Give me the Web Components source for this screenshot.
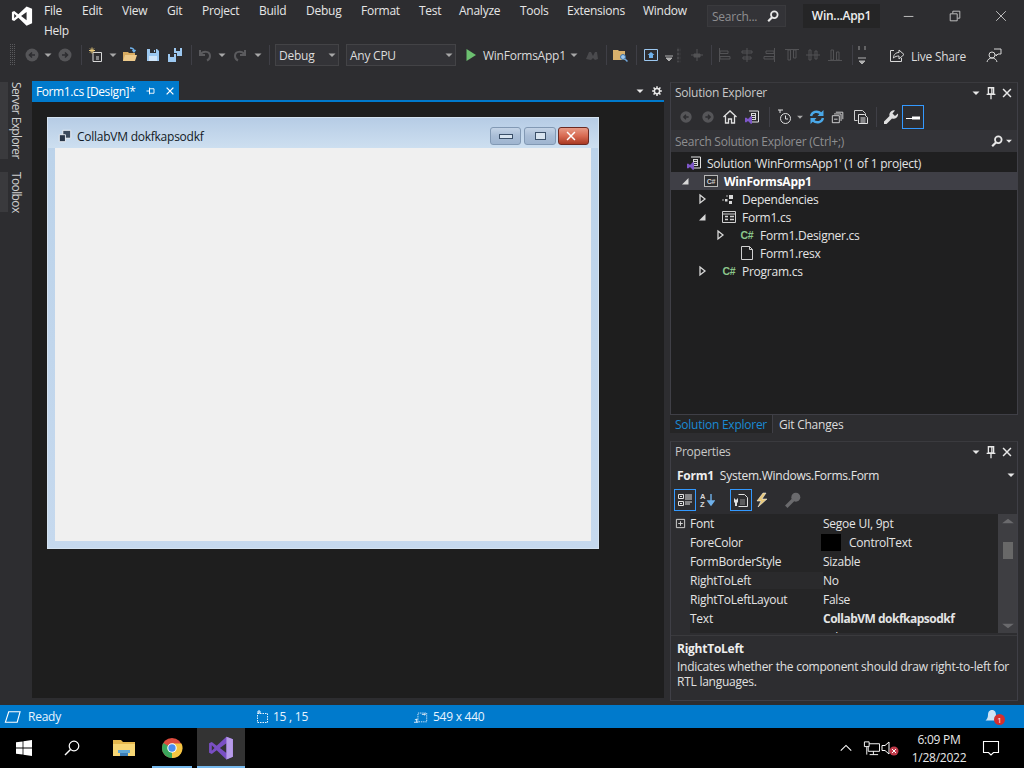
<!DOCTYPE html>
<html>
<head>
<meta charset="utf-8">
<title>WinFormsApp1</title>
<style>
    html, body { margin: 0; padding: 0; width: 1024px; height: 768px; overflow: hidden; background: #2d2d30; }
    body { font: 12px "Open Sans", "Liberation Sans", sans-serif; color: #e4e4e4; letter-spacing: -0.25px; }
</style>
</head>
<body>
<vs-app></vs-app>
<script>
const VS_PATH = 'M17 1.5 8 10 3.5 6.5 1 7.7v8.6l2.5 1.2L8 14l9 8.5 6-2.5V4zM17 7.5v9L11 12zM3.5 9.5 6 12l-2.5 2.5z';
const ICONS = {
    vs: `<svg viewBox="0 0 24 24"><path fill="#fff" fill-rule="evenodd" d="${VS_PATH}"/></svg>`,
    vspurple: `<svg viewBox="0 0 24 24"><path fill="#7a4fc4" fill-rule="evenodd" d="${VS_PATH}"/><path fill="#b79be8" d="M17 1.5 23 4v16l-6 2.5v-6V7.500z"/></svg>`,
    drop: `<svg viewBox="0 0 12 12"><path fill="currentColor" d="M2.500 4.500h7L6 8z"/></svg>`,
    grip: `<svg viewBox="0 0 6 22"><defs><pattern id="g" width="2" height="2" patternUnits="userSpaceOnUse"><rect width="1" height="1" fill="#5a5a5d"/></pattern></defs><rect width="6" height="22" fill="url(#g)"/></svg>`,
    back: `<svg viewBox="0 0 16 16"><circle cx="8" cy="8" r="6.5" fill="#555558"/><path d="M11 8H6M8 5.5 5.5 8 8 10.5" fill="none" stroke="#2d2d30" stroke-width="1.6"/></svg>`,
    forward: `<svg viewBox="0 0 16 16"><circle cx="8" cy="8" r="6.5" fill="#555558"/><path d="M5 8h5M8 5.5 10.5 8 8 10.5" fill="none" stroke="#2d2d30" stroke-width="1.6"/></svg>`,
    newitem: `<svg viewBox="0 0 16 16"><path d="M5 5.5h8.5v9H5z" fill="none" stroke="#d8d8d8"/><path d="M8 10h3M8 12h3" stroke="#d8d8d8"/><path d="M4 .5v6M1 3.5h6M2 1.5l4 4M6 1.5l-4 4" stroke="#e8c878"/></svg>`,
    open: `<svg viewBox="0 0 16 16"><path d="M1 5h5l1 1h6v8H1z" fill="#d8ab61"/><path d="M3 8h12l-2 6H1z" fill="#edca8c"/><path d="M8 1c3 0 4 1 4 3M10.500 3 12 5l1.500-2" fill="none" stroke="#6fb1ea" stroke-width="1.300"/></svg>`,
    save: `<svg viewBox="0 0 16 16"><path d="M2 2h10l2 2v10H2z" fill="#9cc8f0"/><path d="M5 2h6v4H5z" fill="#2d2d30"/><path d="M9 3h1v2H9z" fill="#9cc8f0"/><path d="M4 9h8v5H4z" fill="#cfe4f8"/></svg>`,
    saveall: `<svg viewBox="0 0 16 16"><path d="M1 7h8v8H1z" fill="#9cc8f0"/><path d="M3 7h4v3H3z" fill="#2d2d30"/><path d="M7 1h8v8H10V6H7z" fill="#9cc8f0"/><path d="M9 1h4v3H9z" fill="#2d2d30"/></svg>`,
    undo: `<svg viewBox="0 0 16 16"><path d="M3 3v5h5M3.500 7.500C6 3.500 13 4 13 9c0 2-1 3.500-3 4.500" fill="none" stroke="#5b5b5e" stroke-width="2"/></svg>`,
    redo: `<svg viewBox="0 0 16 16"><path d="M13 3v5H8M12.500 7.500C10 3.500 3 4 3 9c0 2 1 3.500 3 4.500" fill="none" stroke="#5b5b5e" stroke-width="2"/></svg>`,
    play: `<svg viewBox="0 0 16 16"><path fill="#6cc070" d="M3.500 2 13 8l-9.500 6z"/></svg>`,
    attach: `<svg viewBox="0 0 16 16"><path fill="#4a4a4d" d="M2 12 5 5h2l2 4 2-4h2l1 7-3 1-2-2-2 2z"/></svg>`,
    findfolder: `<svg viewBox="0 0 16 16"><path d="M1 3h5l1 1h6v9H1z" fill="#d8b06c"/><circle cx="11" cy="10" r="2.500" fill="#9cc8f0" stroke="#3c6fa0"/><path d="m13 12 2.500 2.500" stroke="#6fa6db" stroke-width="1.500"/></svg>`,
    homebox: `<svg viewBox="0 0 16 16"><path d="M1.500 2.500h13v11h-13z" fill="none" stroke="#9cc8f0"/><path d="M8 5 4.500 8H6v3h4V8h1.500z" fill="#6fb1ea"/></svg>`,
    dropbar: `<svg viewBox="0 0 12 16"><path d="M2 9h8M3 11h6l-3 3z" stroke="#b0b0b0" fill="#b0b0b0"/></svg>`,
    alignT: `<svg viewBox="0 0 16 16"><path d="M8 2v12M2 8h12M5 7h6v3H5z" stroke="#525255" fill="#525255"/></svg>`,
    alignL: `<svg viewBox="0 0 16 16"><path d="M2.500 1v14" stroke="#525255"/><path d="M3 4h8v2.500H3zM3 9.500h10V12H3z" fill="none" stroke="#525255"/></svg>`,
    alignC: `<svg viewBox="0 0 16 16"><path d="M8 1v14" stroke="#525255"/><path d="M3 4h10v2H3zM4 10h8v2H4z" fill="none" stroke="#525255"/></svg>`,
    alignR: `<svg viewBox="0 0 16 16"><path d="M13.500 1v14" stroke="#525255"/><path d="M5 4h8v2.500H5zM3 9.500h10V12H3z" fill="none" stroke="#525255"/></svg>`,
    alignTop: `<svg viewBox="0 0 16 16"><path d="M1 2.500h14" stroke="#525255"/><path d="M4 3v10h2.500V3zM9.500 3v8H12V3z" fill="none" stroke="#525255"/></svg>`,
    alignMid: `<svg viewBox="0 0 16 16"><path d="M1 8h14" stroke="#525255"/><path d="M4 3v10h2V3zM10 4v8h2V4z" fill="none" stroke="#525255"/></svg>`,
    alignBot: `<svg viewBox="0 0 16 16"><path d="M1 13.500h14" stroke="#525255"/><path d="M4 3v10h2.500V3zM9.500 5v8H12V5z" fill="none" stroke="#525255"/></svg>`,
    spacing: `<svg viewBox="0 0 16 22"><path d="M5 2v4M11 2v4" stroke="#9a9a9a"/><path d="M4 14h8M5 17h6l-3 3z" stroke="#b0b0b0" fill="#b0b0b0"/></svg>`,
    liveshare: `<svg viewBox="0 0 16 16"><path d="M5 3.500H1.500v11h11V11" fill="none" stroke="#d8d8d8"/><path d="M4.500 11c0-4 3-5.500 5.500-5.500V3l5 4.500-5 4.500V9c-2 0-4 .5-5.500 2z" fill="none" stroke="#d8d8d8"/></svg>`,
    feedback: `<svg viewBox="0 0 16 16"><circle cx="6" cy="8" r="3" fill="none" stroke="#d8d8d8"/><path d="M1 15c.5-2.500 2.500-4 5-4s4.500 1.500 5 4M8 2h7v5h-3l-2 2V7" fill="none" stroke="#d8d8d8"/></svg>`,
    search: `<svg viewBox="0 0 16 16"><circle cx="9.500" cy="6.500" r="3.800" fill="none" stroke="#e8e8e8" stroke-width="2"/><path d="M7 9.500 2.500 14" stroke="#e8e8e8" stroke-width="2.500"/></svg>`,
    gear: `<svg viewBox="0 0 16 16"><circle cx="8" cy="8" r="3.500" fill="none" stroke="#e8e8e8" stroke-width="2"/><path d="M8 1.500v3M8 11.500v3M1.500 8h3M11.500 8h3M3.400 3.400l2.100 2.100M10.500 10.500l2.100 2.100M3.400 12.600l2.100-2.100M10.500 5.500l2.100-2.100" stroke="#e8e8e8" stroke-width="2"/></svg>`,
    pin: `<svg viewBox="0 0 16 16"><path d="M5 2h6v7H5zM3 9.500h10M8 10v5M9 2.500v6" fill="none" stroke="#e8e8e8" stroke-width="1.500"/></svg>`,
    tabpin: `<svg viewBox="0 0 16 16"><path d="M6 5h6v6H6zM2 8h4M6 3.500v9" fill="none" stroke="#fff" stroke-width="1.200"/></svg>`,
    close: `<svg viewBox="0 0 16 16"><path d="m3.500 3.500 9 9M12.500 3.500l-9 9" stroke="#e8e8e8" stroke-width="1.700"/></svg>`,
    closew: `<svg viewBox="0 0 16 16"><path d="m3.500 3.500 9 9M12.500 3.500l-9 9" stroke="#fff" stroke-width="1.700"/></svg>`,
    winmin: `<svg viewBox="0 0 16 16"><path d="M2 8.500h11" stroke="#cfcfcf"/></svg>`,
    winmax: `<svg viewBox="0 0 16 16"><path d="M2.500 5.500h8v8h-8zM5.500 5V2.500h8v8H11" fill="none" stroke="#cfcfcf"/></svg>`,
    winclose: `<svg viewBox="0 0 16 16"><path d="m2.500 2.500 11 11M13.500 2.500l-11 11" stroke="#cfcfcf"/></svg>`,
    home: `<svg viewBox="0 0 16 16"><path d="M1.500 8 8 2l6.500 6M3.500 7v7h3v-4h3v4h3V7" fill="none" stroke="#e0e0e0" stroke-width="1.300"/></svg>`,
    sln: `<svg viewBox="0 0 16 16"><path d="M5 2h9.500v11H8" fill="none" stroke="#e0e0e0"/><path d="M7 4h5v7H7z" fill="#d8d8d8"/><path d="M8 5.500h3M8 7.500h3M8 9.500h3" stroke="#2d2d30"/><path fill="#7e57c9" d="M7 7 4 10 2 8.500l-1 .5v4l1 .5L4 12l3 3 1-.5v-7z"/></svg>`,
    history: `<svg viewBox="0 0 16 16"><circle cx="8.500" cy="9.500" r="5" fill="none" stroke="#e0e0e0"/><path d="M8.500 6.500v3.500H11M1 1h5M3 1v3" fill="none" stroke="#e0e0e0"/></svg>`,
    sync: `<svg viewBox="0 0 16 16"><path d="M2 7C3 3 8 1 12 4.500M14 9c-1 4-6 6-10 2.500" fill="none" stroke="#4aa8e8" stroke-width="2.400"/><path d="M14.500 1v6h-6zM1.500 15V9h6z" fill="#4aa8e8"/></svg>`,
    collapse: `<svg viewBox="0 0 16 16"><path d="M5.500 2.500h8v8M3.500 4.500h8v8" fill="none" stroke="#e0e0e0"/><path d="M1.500 6.500h8v8h-8zM3.500 10.500h4" fill="#2d2d30" stroke="#e0e0e0"/></svg>`,
    showall: `<svg viewBox="0 0 16 16"><path d="M1.500 1.500h8l3 3v2M1.500 1.500v10h3" fill="none" stroke="#cfcfcf"/><path d="M5.500 5.500h6l3 3v6h-9z" fill="none" stroke="#e0e0e0"/><path d="M7.500 9h5M7.500 11h5M7.500 13h5" stroke="#e0e0e0"/></svg>`,
    wrench: `<svg viewBox="0 0 16 16"><path d="M15 4.500 12 7 9.500 4.500 12 1.500a4.500 4.500 0 0 0-5.500 5.500L1 12.500v2.500h2.500L9 9.500a4.500 4.500 0 0 0 6-5z" fill="#e0e0e0"/></svg>`,
    dash: `<svg viewBox="0 0 16 16"><path d="M1 9.500h6" stroke="#fff"/><path d="M7 7.500h8v3H7z" fill="#fff"/></svg>`,
    csproj: `<svg viewBox="0 0 16 16"><rect x="1.500" y="2.500" width="13" height="11" fill="#2d2d30" stroke="#b8b8b8"/><text x="8" y="11" font-size="7" font-weight="700" text-anchor="middle" fill="#cfcfcf" font-family="Liberation Sans">C#</text></svg>`,
    deps: `<svg viewBox="0 0 16 16"><path d="M8 4h4v4H8zM4 8h2.500v2.500H4zM8 10h3v3H8z" fill="#d8d8d8"/><path d="M1 9h2M5 5h2" stroke="#b0b0b0"/></svg>`,
    formfile: `<svg viewBox="0 0 16 16"><path d="M1.500 2.500h13v11h-13z" fill="none" stroke="#d0d0d0"/><path d="M1.500 5h13" stroke="#d0d0d0"/><path d="M4 7.500h3M9 7.500h4M4 10.500h3M9 10.500h4" stroke="#d0d0d0" stroke-width="1.300"/></svg>`,
    cs: `<svg viewBox="0 0 16 16"><text x="8" y="12" font-size="10.500" font-weight="700" text-anchor="middle" fill="#8cc78c" font-family="Liberation Sans">C#</text></svg>`,
    resx: `<svg viewBox="0 0 16 16"><path d="M2.500 1.500h8l3 3v10h-11z" fill="none" stroke="#d0d0d0"/><path d="M10.500 1.500v3h3" fill="none" stroke="#d0d0d0"/></svg>`,
    expanded: `<svg viewBox="0 0 12 12"><path fill="#d8d8d8" d="M9.500 3v6.500H3z"/></svg>`,
    collapsed: `<svg viewBox="0 0 12 12"><path fill="none" stroke="#d8d8d8" stroke-width="1.300" d="M4 2l5 4-5 4z"/></svg>`,
    categorized: `<svg viewBox="0 0 16 16"><path d="M1.500 2.500h5v4h-5zM1.500 9.500h5v4h-5z" fill="none" stroke="#e0e0e0"/><path d="M8 3h7M8 5h7M8 7h7M8 10h7M8 12h5M3 4.500h2M3 11.500h2" stroke="#e0e0e0"/></svg>`,
    alpha: `<svg viewBox="0 0 16 16"><text x="1" y="7" font-size="7.500" font-weight="700" fill="#d8d8d8" font-family="Liberation Sans">A</text><text x="1" y="15" font-size="7.500" font-weight="700" fill="#d8d8d8" font-family="Liberation Sans">Z</text><path d="M12 2v9M9 9l3 4 3-4z" stroke="#6fb1ea" fill="#6fb1ea" stroke-width="1.400"/></svg>`,
    propsheet: `<svg viewBox="0 0 16 16"><path d="M5.500 2.500h6l3 3v9h-9" fill="none" stroke="#e0e0e0"/><path d="M1 6l2 2 2-2v4l-1 1v3H2v-3L1 10z" fill="#e0e0e0"/><path d="M7 8h5M7 10h5M7 12h5" stroke="#8a8a8a"/></svg>`,
    bolt: `<svg viewBox="0 0 16 16"><path d="M9 1 3 9h4l-3 6 9-8H8l4-6z" fill="#e8c878" stroke="#fff" stroke-width=".5"/></svg>`,
    key: `<svg viewBox="0 0 16 16"><circle cx="10.500" cy="5.500" r="4" fill="#6a6a6d"/><path d="M8 8 2 14" stroke="#6a6a6d" stroke-width="3"/></svg>`,
    plusbox: `<svg viewBox="0 0 12 12"><path d="M1.500 1.500h9v9h-9zM3.500 6h5M6 3.500v5" fill="none" stroke="#dcdcdc"/></svg>`,
    up: `<svg viewBox="0 0 12 12"><path d="M1 8h10L6 4z" fill="#6a6a6d"/></svg>`,
    down: `<svg viewBox="0 0 12 12"><path d="M1 4h10L6 8z" fill="#6a6a6d"/></svg>`,
    stack: `<svg viewBox="0 0 16 16"><path d="M5.500 1.500h9v9h-9z" fill="#3c4a5c" stroke="#f4f7fb"/><path d="M1.500 6.500h7v8h-7z" fill="#2a3648" stroke="#f4f7fb"/></svg>`,
    ready: `<svg viewBox="0 0 18 14"><path d="M5 1.500h12l-3 11H1.500z" fill="none" stroke="#fff" stroke-width="1.200"/></svg>`,
    pos: `<svg viewBox="0 0 14 14"><path d="M1.500 3.500h10v9h-10z" fill="none" stroke="#e8f4ff" stroke-dasharray="1.500 1"/><path d="M3 0v4M1 2h4" stroke="#e8f4ff"/></svg>`,
    size: `<svg viewBox="0 0 16 14"><path d="M4.500 2.500h10v10h-10z" fill="none" stroke="#e8f4ff" stroke-dasharray="1.500 1"/><path d="M9 4h4M11.500 3l1.500 1-1.500 1M1 10h3M3 9v4M0 13h5" stroke="#e8f4ff"/></svg>`,
    bell: `<svg viewBox="0 0 16 16"><path d="M8 1c3 0 4 2.500 4 5 0 3 1.500 4.500 2.500 5.500h-13C2.500 10.500 4 9 4 6c0-2.500 1-5 4-5z" fill="#cfe3f5"/></svg>`,
    win: `<svg viewBox="0 0 16 16"><path fill="#fff" d="M0 2.300 6.600 1.400v6.200H0zM7.400 1.300 16 0v7.600H7.400zM0 8.400h6.600v6.200L0 13.700zM7.400 8.400H16V16l-8.600-1.300z"/></svg>`,
    tsearch: `<svg viewBox="0 0 16 16"><circle cx="10" cy="6" r="4.800" fill="none" stroke="#fff" stroke-width="1.200"/><path d="M6.500 9.500 1 15" stroke="#fff" stroke-width="1.400"/></svg>`,
    explorer: `<svg viewBox="0 0 22 18"><path d="M0 1h8l2 2h12v14H0z" fill="#e6b94e"/><path d="M0 5h22v12H0z" fill="#f8d775"/><path d="M5 11h12v3H5z" fill="#5fa8d8"/><path d="M7 14h8v3H7z" fill="#3d7fb8"/></svg>`,
    chrome: `<svg viewBox="0 0 24 24"><circle cx="12" cy="12" r="11" fill="#dd4b3e"/><path d="M12 12 2.500 6.500A11 11 0 0 0 12 23z" fill="#3ba55c"/><path d="M12 7h10.300A11 11 0 0 1 12 23z" fill="#f5c542"/><circle cx="12" cy="12" r="5.200" fill="#fff"/><circle cx="12" cy="12" r="4" fill="#4a8df0"/></svg>`,
    caret: `<svg viewBox="0 0 16 16"><path d="m2 11 6-6 6 6" fill="none" stroke="#fff" stroke-width="1.200"/></svg>`,
    network: `<svg viewBox="0 0 18 16"><path d="M5.500 3.500h12v8h-12zM11 11.500V15M7 15h9" fill="none" stroke="#fff"/><path d="M1.500 1.500h5v5h-5z" fill="#000" stroke="#fff"/><path d="M4 7v8" stroke="#fff"/></svg>`,
    speaker: `<svg viewBox="0 0 18 16"><path d="M1 5.500h3L8 2v12L4 10.500H1z" fill="none" stroke="#fff"/><circle cx="13" cy="11" r="4.500" fill="#c03a4a"/><path d="m11 9 4 4M15 9l-4 4" stroke="#fff"/></svg>`,
    notify: `<svg viewBox="0 0 18 18"><path d="M1.500 2.500h15v11h-5L9 16l-2.500-2.500h-5z" fill="none" stroke="#fff" stroke-width="1.100"/></svg>`
};

// shorthand for the repeated boilerplate
function define(tag, css, html, setup) {
    customElements.define(tag, class extends HTMLElement {
        connectedCallback() {
            if (this.shadowRoot) return;
            const root = this.attachShadow({ mode: 'open' });
            root.innerHTML = `<style>${css}</style>${typeof html === 'function' ? html(this) : html}`;
            if (setup) setup(root, this);
        }
    });
}

define('vs-icon', `
    :host { display: inline-flex; align-items: center; justify-content: center; flex: none; color: #a8a8a8; }
    svg { display: block; width: 100%; height: 100%; }
`, el => ICONS[el.getAttribute('name')] || '', (root, el) => {
    const w = el.getAttribute('w') || 16;
    el.style.width = w + 'px';
    el.style.height = (el.getAttribute('h') || w) + 'px';
});

const MENU = [['File', 38], ['Edit', 40], ['View', 45], ['Git', 35], ['Project', 57], ['Build', 47], ['Debug', 55], ['Format', 58], ['Test', 40], ['Analyze', 61], ['Tools', 47], ['Extensions', 76], ['Window', 60], ['Help', 60]];

define('vs-title-bar', `
    :host { display: flex; height: 42px; background: #2d2d30; flex: none; }
    .logo { width: 44px; flex: none; display: flex; justify-content: center; padding: 5px 0 0 0; box-sizing: border-box; height: 30px; }
    .menu { width: 660px; flex: none; display: flex; flex-wrap: wrap; align-content: flex-start; }
    .menu span { height: 20px; line-height: 21px; color: #e6e6e6; }
    .find { width: 79px; height: 22px; margin: 5px 0 0 3px; border: 1px solid #3a3a3d; box-sizing: border-box; display: flex; align-items: center; padding: 0 5px 0 4px; justify-content: space-between; color: #8e8e90; background: #333337; }
    .name { width: 77px; height: 24px; margin: 4px 0 0 17px; background: #252526; color: #eee; line-height: 24px; text-align: center; font-weight: 600; font-size: 12px; }
    .win { display: flex; margin-left: 6px; }
    .win div { width: 46px; height: 32px; display: flex; align-items: center; justify-content: center; }
`, `<div class="logo"><vs-icon name="vs" w="22"></vs-icon></div>
    <div class="menu">${MENU.map(m => `<span style="width:${m[1]}px">${m[0]}</span>`).join('')}</div>
    <div class="find"><span>Search...</span><vs-icon name="search" w="14"></vs-icon></div>
    <div class="name">Win...App1</div>
    <div class="win">
        <div><vs-icon name="winmin" w="14"></vs-icon></div>
        <div><vs-icon name="winmax" w="14"></vs-icon></div>
        <div><vs-icon name="winclose" w="14"></vs-icon></div>
    </div>`);

// [icon, cell width, gap before]
const TOOLS = [
    ['grip', 6, 4], ['back', 20, 6], ['drop', 12, 0], ['forward', 20, 1], ['|', 1, 6],
    ['newitem', 20, 4], ['drop', 12, 1], ['open', 20, 1], ['save', 20, 3], ['saveall', 20, 2], ['|', 1, 6],
    ['undo', 20, 3], ['drop', 12, 1], ['redo', 20, 2], ['drop', 12, 2], ['|', 1, 5],
    ['#Debug', 64, 5], ['#Any CPU', 110, 7], ['play', 16, 7], ['$WinFormsApp1', 82, 4], ['drop', 12, 3], ['attach', 18, 3], ['|', 1, 5],
    ['findfolder', 20, 3], ['|', 1, 6], ['homebox', 20, 4], ['dropbar', 12, 2], ['grip', 4, 2],
    ['alignT', 20, 6], ['|', 1, 4], ['alignL', 20, 3], ['alignC', 20, 2], ['alignR', 20, 2], ['alignTop', 20, 3], ['alignMid', 20, 1], ['alignBot', 20, 2], ['|', 1, 7],
    ['spacing', 18, 0], ['liveshare', 16, 18], ['$Live Share', 56, 6], ['feedback', 18, 18]
];

define('vs-toolbar', `
    :host { display: flex; align-items: center; height: 28px; background: #2d2d30; flex: none; padding: 0 0 2px 6px; box-sizing: border-box; }
    .sep { height: 20px; background: #3f3f46; flex: none; }
    .combo { height: 22px; box-sizing: border-box; border: 1px solid #434346; background: #333337; display: flex; align-items: center; justify-content: space-between; padding-left: 3px; color: #dcdcdc; flex: none; }
    .label { color: #dcdcdc; flex: none; white-space: nowrap; }
    .low { margin-top: 3px; }
`, TOOLS.map(([n, w, gap]) => {
    const m = `margin-left:${gap}px;width:${w}px`;
    if (n === '|') return `<div class="sep" style="${m}"></div>`;
    if (n[0] === '#') return `<div class="combo" style="${m}"><span>${n.slice(1)}</span><vs-icon name="drop" w="12"></vs-icon></div>`;
    if (n[0] === '$') return `<span class="label ${n === '$Live Share' ? 'low' : ''}" style="${m}">${n.slice(1)}</span>`;
    const h = n === 'grip' ? 22 : n === 'spacing' ? 22 : 16;
    return `<vs-icon name="${n}" w="${w}" h="${h}" style="margin-left:${gap}px"></vs-icon>`;
}).join(''));

define('vs-side-rail', `
    :host { display: flex; flex-direction: column; width: 32px; flex: none; background: #2d2d30; padding-top: 12px; box-sizing: border-box; gap: 13px; }
    span { display: block; writing-mode: vertical-rl; width: 16px; border-left: 8px solid #3a3a3d; color: #cfcfcf; line-height: 16px; letter-spacing: -0.62px; }
`, `<span>Server Explorer</span><span>Toolbox</span>`);

define('form-designer', `
    :host { display: block; width: 552px; height: 432px; background: #d5e3f1; padding: 1px; box-sizing: border-box; }
    .frame { height: 100%; display: flex; flex-direction: column; background: linear-gradient(#b4cce6, #bcd3ea 8%, #c6d9ee); padding: 0 7px 7px; box-sizing: border-box; }
    .cap { height: 30px; flex: none; display: flex; align-items: center; background: linear-gradient(#b6cce5, #cddff0); margin: 0 -7px; padding: 6px 9px 0 10px; box-sizing: border-box; color: #121a26; }
    .cap vs-icon { margin-right: 5px; }
    .cap span { flex: 1; }
    .b { width: 32px; height: 18px; box-sizing: border-box; border: 1px solid #8299b4; border-radius: 3px; background: linear-gradient(#c3d3e6, #a9bdd6 50%, #9fb5d0); display: flex; align-items: center; justify-content: center; margin-left: 2px; }
    .b i { display: block; box-sizing: border-box; border: 1px solid #3a4f68; background: #d8e4f0; }
    .b.close { background: linear-gradient(#e79a86, #d86a52 50%, #a93a24); border-color: #6c2a22; width: 31px; }
    .client { flex: 1; background: #f0f0f0; }
`, `<div class="frame">
        <div class="cap"><vs-icon name="stack" w="14"></vs-icon><span>CollabVM dokfkapsodkf</span>
            <div class="b" style="width:31px"><i style="width:14px;height:5px"></i></div>
            <div class="b" style="margin-left:3px"><i style="width:11px;height:8px"></i></div>
            <div class="b close"><vs-icon name="closew" w="14"></vs-icon></div>
        </div>
        <div class="client"></div>
    </div>`);

define('vs-doc-well', `
    :host { display: flex; flex-direction: column; width: 632px; flex: none; padding-bottom: 7px; box-sizing: border-box; }
    .strip { height: 21px; display: flex; align-items: stretch; flex: none; margin-top: 11px; }
    .tab { width: 147px; background: #007acc; color: #fff; display: flex; align-items: center; padding: 1px 0 0 4px; box-sizing: border-box; height: 19px; letter-spacing: -0.4px; }
    .tab span { width: 109px; }
    .tab vs-icon + vs-icon { margin-left: 7px; }
    .ctl { margin-left: auto; display: flex; height: 19px; align-items: center; padding-right: 1px; gap: 5px; }
    .line { height: 2px; background: #007acc; flex: none; margin-top: -2px; }
    .well { flex: 1; background: #1e1e1e; padding: 15px 0 0 15px; box-sizing: border-box; }
`, `<div class="strip">
        <div class="tab"><span>Form1.cs [Design]*</span><vs-icon name="tabpin" w="12"></vs-icon><vs-icon name="closew" w="12"></vs-icon></div>
        <div class="ctl"><vs-icon name="drop" w="12" style="color:#e8e8e8"></vs-icon><vs-icon name="gear" w="12"></vs-icon></div>
    </div>
    <div class="line"></div>
    <div class="well"><form-designer></form-designer></div>`);

define('tool-window', `
    :host { display: flex; flex-direction: column; box-sizing: border-box; border: 1px solid #3f3f46; border-top-color: #3a3a3e; }
    .head { height: 20px; display: flex; align-items: center; flex: none; padding: 0 3px 1px 4px; box-sizing: border-box; color: #c8c8c8; }
    .dots { flex: 1; height: 5px; margin: 0 6px; background-image: radial-gradient(#4a4a4d 0.6px, transparent 0.7px); background-size: 2px 2px; }
    .head vs-icon { margin-left: 2px; }
    .body { flex: 1; min-height: 0; display: flex; flex-direction: column; }
`, el => `<div class="head"><span>${el.getAttribute('heading')}</span><div class="dots"></div>
        <vs-icon name="drop" w="12" style="color:#e8e8e8"></vs-icon><vs-icon name="pin" w="14"></vs-icon><vs-icon name="close" w="14"></vs-icon></div>
    <div class="body"><slot></slot></div>`);

define('tree-row', `
    :host { display: flex; align-items: center; height: 18px; flex: none; white-space: nowrap; color: #e4e4e4; }
    :host([selected]) { background: #3f3f46; color: #fff; font-weight: 700; }
    .arrow { height: 12px; flex: none; }
    .arrow vs-icon { display: flex; }
    .ico { margin-right: 5px; }
`, el => {
    const lvl = +el.getAttribute('level');
    const arrow = el.getAttribute('arrow');
    const flat = el.hasAttribute('flat');
    return `<div style="width:${lvl}px;flex:none"></div>
        <div class="arrow" style="width:${flat ? 15 : 24}px">${arrow ? `<vs-icon name="${arrow}" w="12" style="margin-left:${lvl > 8 ? -1 : 0}px"></vs-icon>` : ''}</div>
        <vs-icon class="ico" name="${el.getAttribute('icon')}" w="16"></vs-icon><span><slot></slot></span>`;
});

define('solution-explorer', `
    :host { display: flex; flex-direction: column; flex: 1; min-height: 0; }
    .bar { height: 27px; display: flex; align-items: center; flex: none; padding-left: 8px; }
    .sep { width: 1px; height: 20px; background: #3f3f46; flex: none; }
    .hot { width: 22px; height: 24px; margin-left: 3px; border: 1px solid #3399ff; box-sizing: border-box; display: flex; align-items: center; justify-content: center; }
    .find { height: 22px; flex: none; background: #333337; display: flex; align-items: center; padding: 0 3px 0 4px; color: #8e8e90; }
    .find span { flex: 1; }
    .tree { flex: 1; padding-top: 2px; display: flex; flex-direction: column; background: #1f1f20; }
`, `<div class="bar">
        <vs-icon name="back" w="14"></vs-icon>
        <vs-icon name="forward" w="14" style="margin-left:8px"></vs-icon>
        <vs-icon name="home" w="16" style="margin-left:7px"></vs-icon>
        <vs-icon name="sln" w="16" style="margin-left:6px"></vs-icon>
        <div class="sep" style="margin-left:9px"></div>
        <vs-icon name="history" w="16" style="margin-left:7px"></vs-icon>
        <vs-icon name="drop" w="10" style="margin-left:2px"></vs-icon>
        <vs-icon name="sync" w="16" style="margin-left:4px"></vs-icon>
        <vs-icon name="collapse" w="14" style="margin-left:6px"></vs-icon>
        <vs-icon name="showall" w="16" style="margin-left:8px"></vs-icon>
        <div class="sep" style="margin-left:7px"></div>
        <vs-icon name="wrench" w="16" style="margin-left:6px"></vs-icon>
        <div class="hot"><vs-icon name="dash" w="16"></vs-icon></div>
    </div>
    <div class="find"><span>Search Solution Explorer (Ctrl+;)</span><vs-icon name="search" w="14"></vs-icon><vs-icon name="drop" w="10" style="color:#e8e8e8"></vs-icon></div>
    <div class="tree">
        <tree-row level="0" flat icon="sln">Solution 'WinFormsApp1' (1 of 1 project)</tree-row>
        <tree-row level="8" arrow="expanded" icon="csproj" selected>WinFormsApp1</tree-row>
        <tree-row level="26" arrow="collapsed" icon="deps">Dependencies</tree-row>
        <tree-row level="26" arrow="expanded" icon="formfile">Form1.cs</tree-row>
        <tree-row level="44" arrow="collapsed" icon="cs">Form1.Designer.cs</tree-row>
        <tree-row level="44" icon="resx">Form1.resx</tree-row>
        <tree-row level="26" arrow="collapsed" icon="cs">Program.cs</tree-row>
    </div>`);

define('panel-tabs', `
    :host { display: flex; height: 18px; flex: none; background: #2d2d30; margin-bottom: 8px; }
    span { line-height: 18px; padding: 1px 6px 0 5px; border-right: 1px solid #3f3f46; color: #dcdcdc; }
    .on { color: #1a8ad4; background: #252526; padding-right: 5px; }
`, `<span class="on">Solution Explorer</span><span style="border:0;padding-left:6px">Git Changes</span>`);

const PROPS = [
    ['Font', 'Segoe UI, 9pt', 'expand'], ['ForeColor', 'ControlText', 'swatch'], ['FormBorderStyle', 'Sizable'],
    ['RightToLeft', 'No', 'sel'], ['RightToLeftLayout', 'False'], ['Text', 'CollabVM dokfkapsodkf', 'bold'], ['UseWaitCursor', 'False']
];

define('property-grid', `
    :host { display: flex; flex-direction: column; flex: 1; min-height: 0; }
    .obj { height: 26px; display: flex; align-items: center; padding-left: 6px; flex: none; box-sizing: border-box; }
    .obj b { margin-right: 6px; color: #eee; }
    .obj span { flex: 1; }
    .bar { height: 24px; flex: none; display: flex; align-items: center; padding-left: 3px; box-sizing: border-box; }
    .hot { width: 22px; height: 22px; border: 1px solid #3399ff; box-sizing: border-box; display: flex; align-items: center; justify-content: center; }
    .grid { height: 119px; flex: none; display: flex; margin-top: 2px; }
    .rows { flex: 1; overflow: hidden; background: #252526; }
    .row { height: 19px; display: flex; align-items: center; white-space: nowrap; }
    .gut { width: 19px; flex: none; display: flex; justify-content: center; background: #2d2d30; align-self: stretch; align-items: center; }
    .n { width: 133px; flex: none; }
    .v { display: flex; align-items: center; }
    .row.sel .n { background: #2a2a2c; }
    .row.swatch .v { margin-left: -2px; }
    .row.bold b { letter-spacing: -0.5px; }
    .sw { width: 20px; height: 17px; background: #000; margin-right: 8px; }
    .scroll { width: 19px; flex: none; background: #3e3e42; display: flex; flex-direction: column; align-items: center; justify-content: space-between; position: relative; }
    .thumb { position: absolute; top: 28px; left: 5px; width: 10px; height: 17px; background: #686868; }
    .desc { flex: 1; padding: 5px 6px 0; line-height: 15px; color: #e0e0e0; border-top: 1px solid #3a3a3d; margin-top: 2px; }
    .desc b { display: block; color: #eee; margin-bottom: 2px; line-height: 16px; }
`, `<div class="obj"><b>Form1</b><span>System.Windows.Forms.Form</span><vs-icon name="drop" w="12" style="color:#e8e8e8"></vs-icon></div>
    <div class="bar">
        <div class="hot"><vs-icon name="categorized" w="16"></vs-icon></div><vs-icon name="alpha" w="16" style="margin:0 15px 0 3px"></vs-icon>
        <div class="hot"><vs-icon name="propsheet" w="16"></vs-icon></div><vs-icon name="bolt" w="16" style="margin:0 14px 0 2px"></vs-icon>
        <vs-icon name="key" w="18"></vs-icon>
    </div>
    <div class="grid">
        <div class="rows">${PROPS.map(([n, v, k]) => `<div class="row ${k || ''}">
            <div class="gut">${k === 'expand' ? '<vs-icon name="plusbox" w="11"></vs-icon>' : ''}</div>
            <div class="n">${n}</div>
            <div class="v">${k === 'swatch' ? '<i class="sw"></i>' : ''}${k === 'bold' ? `<b>${v}</b>` : v}</div></div>`).join('')}</div>
        <div class="scroll"><vs-icon name="up" w="14"></vs-icon><div class="thumb"></div><vs-icon name="down" w="14"></vs-icon></div>
    </div>
    <div class="desc"><b>RightToLeft</b>Indicates whether the component should draw right-to-left for RTL languages.</div>`);

define('vs-status-bar', `
    :host { display: flex; align-items: center; height: 23px; background: #007acc; color: #e8f4ff; flex: none; padding-left: 4px; box-sizing: border-box; }
    span { white-space: nowrap; flex: none; }
    .bell { position: relative; margin-left: auto; width: 40px; height: 23px; display: flex; align-items: center; }
    .badge { position: absolute; right: 19px; top: 9px; width: 11px; height: 11px; border-radius: 50%; background: #d32f2f; color: #fff; font-size: 8px; line-height: 11px; text-align: center; }
`, `<vs-icon name="ready" w="17" h="14"></vs-icon><span style="margin-left:7px;width:228px">Ready</span>
    <vs-icon name="pos" w="14"></vs-icon><span style="margin-left:3px;width:141px">15 , 15</span>
    <vs-icon name="size" w="14" h="14"></vs-icon><span style="margin-left:5px">549 x 440</span>
    <div class="bell"><vs-icon name="bell" w="16"></vs-icon><div class="badge">1</div></div>`);

define('win-taskbar', `
    :host { display: flex; height: 40px; background: #000; color: #fff; flex: none; }
    .c { height: 40px; display: flex; align-items: center; justify-content: center; flex: none; box-sizing: border-box; }
    .run { border-bottom: 2px solid #76b9ed; padding-top: 2px; }
    .act { background: #333; }
    .clock { width: 62px; text-align: center; line-height: 18px; padding-top: 2px; font-size: 12px; color: #e8e8e8; white-space: nowrap; }
    .tray { margin-left: auto; display: flex; align-items: center; }
`, `<div class="c" style="width:48px"><vs-icon name="win" w="16"></vs-icon></div>
    <div class="c" style="width:48px"><vs-icon name="tsearch" w="16"></vs-icon></div>
    <div class="c" style="width:56px"><vs-icon name="explorer" w="22" h="18"></vs-icon></div>
    <div class="c run" style="width:40px;margin-right:5px"><vs-icon name="chrome" w="22"></vs-icon></div>
    <div class="c run act" style="width:48px"><vs-icon name="vspurple" w="26"></vs-icon></div>
    <div class="tray">
        <div class="c" style="width:20px"><vs-icon name="caret" w="14"></vs-icon></div>
        <div class="c" style="width:20px;margin-left:5px"><vs-icon name="network" w="17" h="16"></vs-icon></div>
        <div class="c" style="width:18px"><vs-icon name="speaker" w="18" h="16"></vs-icon></div>
        <div class="c clock" style="margin-left:9px"><div>6:09 PM<br>1/28/2022</div></div>
        <div class="c" style="width:42px"><vs-icon name="notify" w="18"></vs-icon></div>
        <div style="width:12px"></div>
    </div>`);

define('vs-app', `
    :host { display: flex; flex-direction: column; width: 1024px; height: 768px; }
    .main { flex: 1; min-height: 0; display: flex; }
    .right { width: 348px; margin-left: 6px; padding-top: 12px; display: flex; flex-direction: column; flex: none; }
    .top { flex: none; height: 333px; display: flex; flex-direction: column; }
    .bottom { flex: none; height: 260px; }
`, `<vs-title-bar></vs-title-bar>
    <vs-toolbar></vs-toolbar>
    <div class="main">
        <vs-side-rail></vs-side-rail>
        <vs-doc-well></vs-doc-well>
        <div class="right">
            <tool-window class="top" heading="Solution Explorer"><solution-explorer></solution-explorer></tool-window>
            <panel-tabs></panel-tabs>
            <tool-window class="bottom" heading="Properties"><property-grid></property-grid></tool-window>
        </div>
    </div>
    <vs-status-bar></vs-status-bar>
    <win-taskbar></win-taskbar>`);
</script>
</body>
</html>
